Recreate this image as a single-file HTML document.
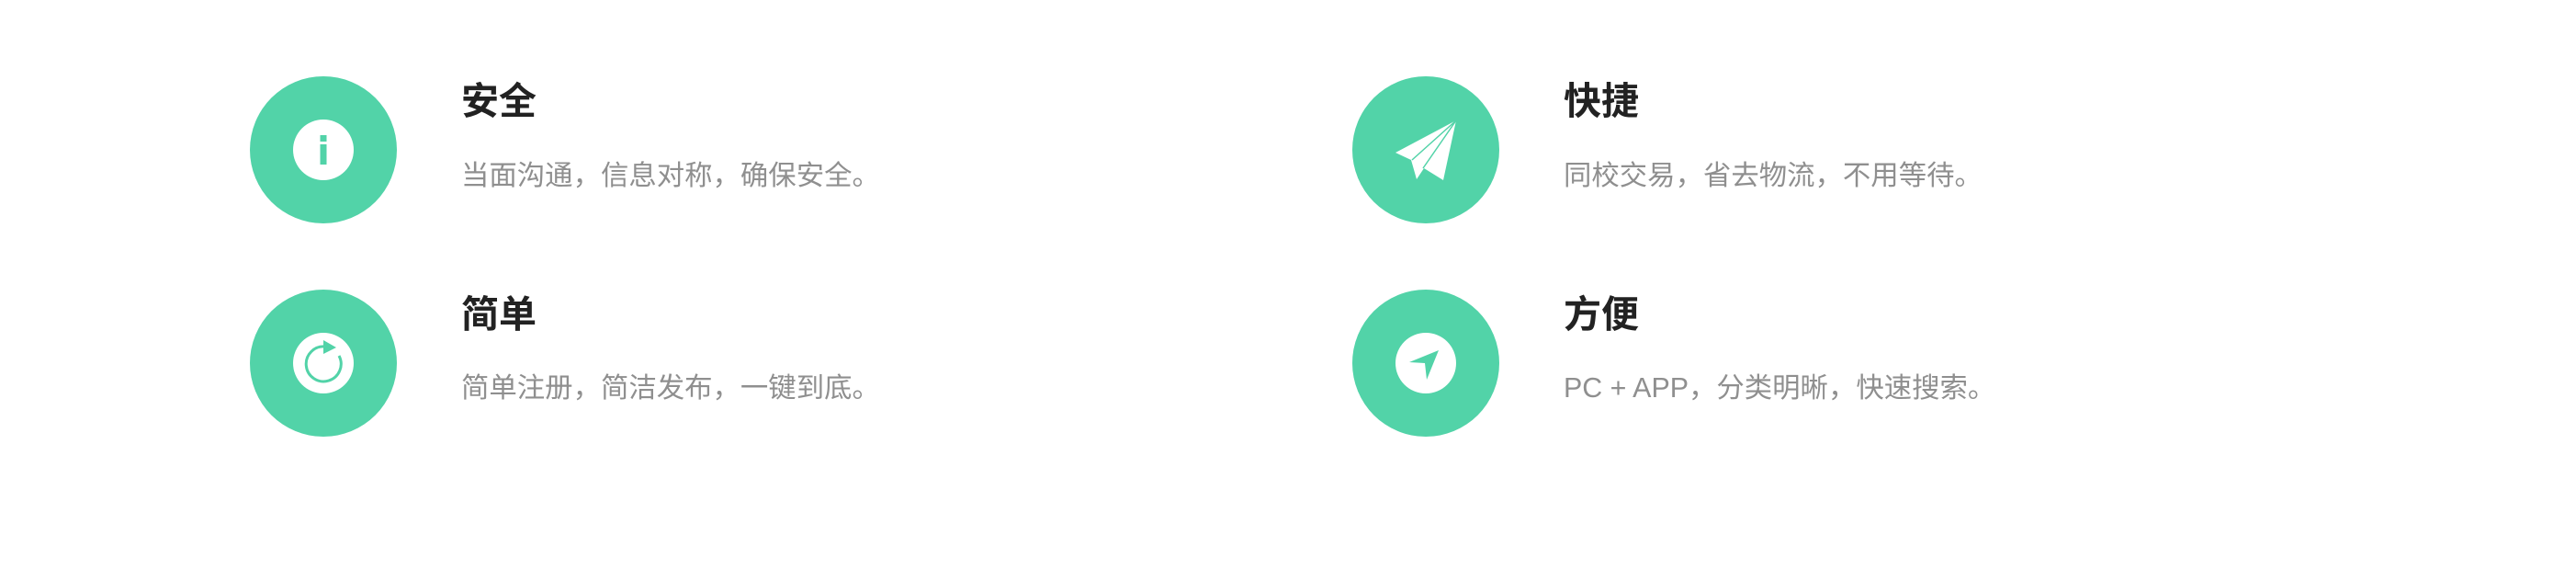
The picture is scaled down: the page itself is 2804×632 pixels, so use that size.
<!DOCTYPE html>
<html><head><meta charset="utf-8"><style>
html,body{margin:0;padding:0;background:#fff;width:2804px;height:632px;overflow:hidden;position:relative;font-family:"Liberation Sans","Noto Sans CJK SC",sans-serif}
svg{position:absolute;width:160px;height:160px}
.t{position:absolute;font-size:41px;font-weight:bold;color:#222;line-height:1;white-space:nowrap}
.d{position:absolute;font-size:30.4px;color:#8f8f8f;line-height:1;white-space:nowrap}
</style></head><body>
<svg style="left:272px;top:83px" viewBox="0 0 160 160"><circle cx="80" cy="80" r="80" fill="#52d3a8"/><circle cx="80" cy="80" r="33" fill="#fff"/><rect x="76.5" y="64" width="7" height="7" fill="#52d3a8"/><rect x="76.5" y="74" width="7" height="22" fill="#52d3a8"/></svg>
<svg style="left:1472px;top:83px" viewBox="0 0 160 160"><circle cx="80" cy="80" r="80" fill="#52d3a8"/><path d="M113 48 L47 83 L64 91 L70 112 L78 100 L99 113 Z" fill="#fff"/><path d="M113 48 L65 91 M113 48 L77 100" stroke="#52d3a8" stroke-width="1.5" fill="none"/></svg>
<svg style="left:272px;top:315px" viewBox="0 0 160 160"><circle cx="80" cy="80" r="80" fill="#52d3a8"/><circle cx="80" cy="80" r="33" fill="#fff"/><path d="M82 62 A19 19 0 1 0 97 72" stroke="#52d3a8" stroke-width="3" fill="none"/><path d="M80 55 L94 63 L80 70 Z" fill="#52d3a8"/></svg>
<svg style="left:1472px;top:315px" viewBox="0 0 160 160"><circle cx="80" cy="80" r="80" fill="#52d3a8"/><circle cx="80" cy="80" r="33" fill="#fff"/><path d="M94 66 L62 79 L79 80 L81 98 Z" fill="#52d3a8"/></svg>
<div class="t" style="left:502px;top:90px">安全</div>
<div class="d" style="left:502px;top:176px">当面沟通，信息对称，确保安全。</div>
<div class="t" style="left:502px;top:322px">简单</div>
<div class="d" style="left:502px;top:407px">简单注册，简洁发布，一键到底。</div>
<div class="t" style="left:1702px;top:90px">快捷</div>
<div class="d" style="left:1702px;top:176px">同校交易，省去物流，不用等待。</div>
<div class="t" style="left:1702px;top:322px">方便</div>
<div class="d" style="left:1702px;top:407px">PC + APP，分类明晰，快速搜索。</div>
</body></html>
